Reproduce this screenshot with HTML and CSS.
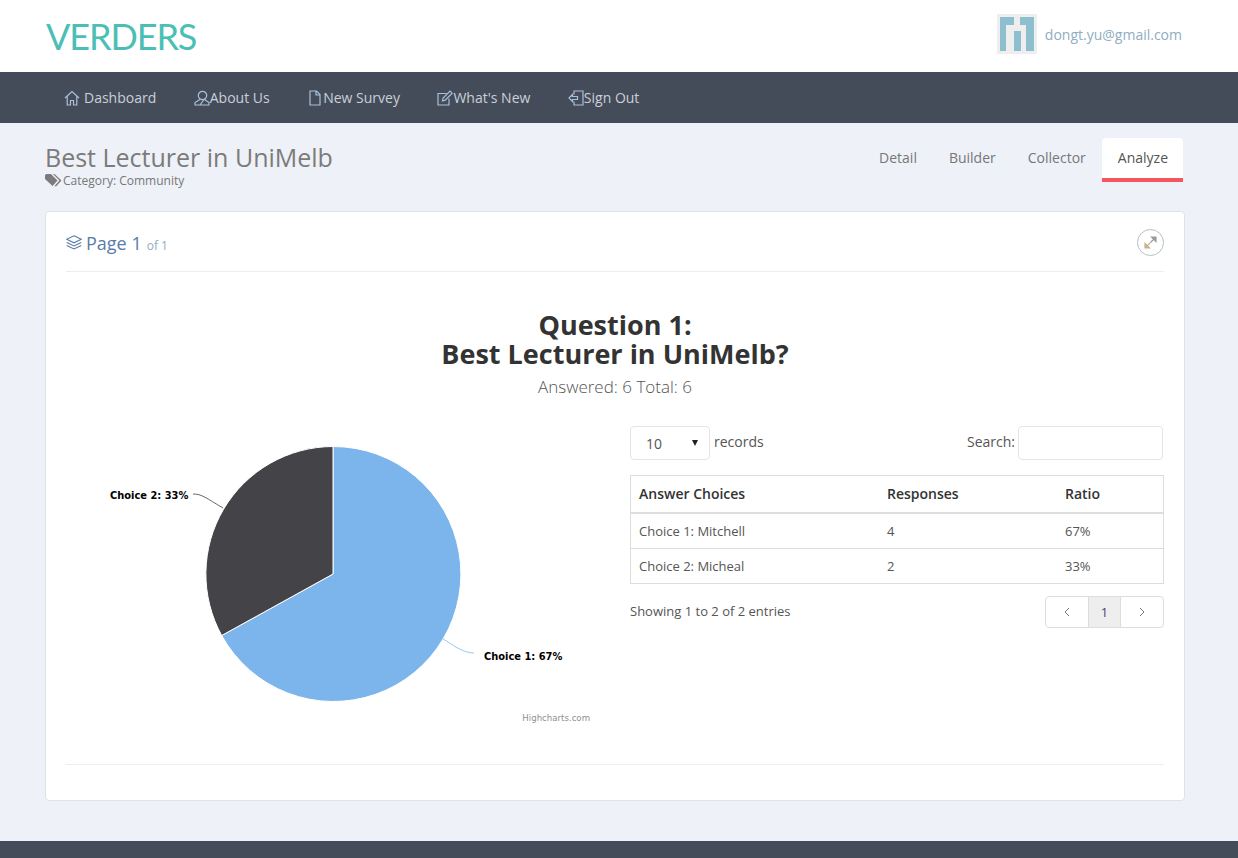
FILE: index.html
```html
<!DOCTYPE html>
<html lang="en">
<head>
    <meta charset="UTF-8">
    <title>Verders - Analyze</title>
    <link rel="stylesheet" href="styles.css">
</head>
<body>

    <header class="top-bar">
        <a class="logo">VERDERS</a>
        <div class="user-box">
            <svg class="avatar" viewBox="0 0 40 40">
                <rect width="40" height="40" fill="#eeeeee"/>
                <path d="M3 3h14v8H9v26H3z M23 3h14v34h-8V11h-6z M17 17h7v20h-7z" fill="#8ebfce"/>
            </svg>
            <span class="user-mail">dongt.yu@gmail.com</span>
        </div>
    </header>

    <nav class="main-nav">
        <a class="nav-item nav-first">
            <svg class="nav-icon" viewBox="0 0 16 16"><path d="M1 8l7-6.500L15 8M3.200 6.500V15h3.300v-4.500h3V15h3.300V6.500"/></svg>
            <span class="nav-gap">Dashboard</span>
        </a>
        <a class="nav-item">
            <svg class="nav-icon" viewBox="0 0 16 16"><circle cx="8.500" cy="5.500" r="4.200"/><path d="M6 9.500L1 12.500V15h14v-2.500l-4.500-3M6 15l4-5.500"/></svg>
            <span>About Us</span>
        </a>
        <a class="nav-item">
            <svg class="nav-icon" viewBox="0 0 16 16"><path d="M3 1h6.500L13 4.500V15H3zM9 1v4h4"/></svg>
            <span>New Survey</span>
        </a>
        <a class="nav-item">
            <svg class="nav-icon" viewBox="0 0 16 16"><path d="M12 8.500V15H1V3.500h8.500M5.500 11l.6-3L13 1l2.200 2.200-7 7z"/></svg>
            <span>What's New</span>
        </a>
        <a class="nav-item">
            <svg class="nav-icon" viewBox="0 0 16 16"><path d="M6 4.500V1h9v14H6v-3.500M1 8l3.500-3.500V6.500h5v3h-5v2z"/></svg>
            <span>Sign Out</span>
        </a>
    </nav>

    <main class="content">
        <div class="page-head">
            <div>
                <h1 class="survey-title">Best Lecturer in UniMelb</h1>
                <div class="survey-cat">
                    <svg class="tag-icon" viewBox="0 0 17 13"><path d="M0 1.500Q0 0 1.500 0H6l6.500 6.500-5 5.500L0 5zM8 0h1.500L16.500 6.500 11 12.500l-1.500-.5 5-5.500z"/></svg>
                    <span>Category: Community</span>
                </div>
            </div>
            <ul class="tabs">
                <li class="tab">Detail</li>
                <li class="tab">Builder</li>
                <li class="tab">Collector</li>
                <li class="tab tab-active">Analyze</li>
            </ul>
        </div>

        <section class="card">
            <div class="card-head">
                <div class="page-label">
                    <svg class="layers-icon" viewBox="0 0 16 15"><path d="M8 .8l7.300 3.500L8 7.800.7 4.300zM.7 7.500L8 11l7.300-3.500M.7 10.500L8 14l7.300-3.500"/></svg>
                    <span class="page-num">Page 1</span>
                    <small class="page-of">of 1</small>
                </div>
                <button class="expand-btn">
                    <svg viewBox="0 0 13 13">
                        <path d="M6.500 6.500L9.500 3.500M7.500 1h4.500v4.500z" class="arrow-dark"/>
                        <path d="M6.500 6.500L3.500 9.500M5.500 12H1V7.500z" class="arrow-tan"/>
                    </svg>
                </button>
            </div>

            <div class="question">
                <h2 class="question-title">Question 1:<br>Best Lecturer in UniMelb?</h2>
                <p class="question-sub">Answered: 6 Total: 6</p>
            </div>

            <div class="result-row">
                <svg class="chart" viewBox="0 0 534 320">
                    <!-- center 267,147 in this box -->
                    <path d="M267 147 L267 19.500 A127.500 127.500 0 1 1 155.700 208.500 Z" fill="#7cb5ec" stroke="#fff"/>
                    <path d="M267 147 L155.700 208.500 A127.500 127.500 0 0 1 267 19.500 Z" fill="#434348" stroke="#fff"/>
                    <path d="M127 67 C136 67 140 71 157 81" fill="none" stroke="#434348" stroke-width=".8"/>
                    <path d="M377 212 C386 217 396 226 408 226" fill="none" stroke="#7cb5ec" stroke-width=".8"/>
                    <text x="44" y="72" class="chart-label">Choice 2: 33%</text>
                    <text x="418" y="233" class="chart-label">Choice 1: 67%</text>
                    <text x="524" y="294" text-anchor="end" class="chart-credit">Highcharts.com</text>
                </svg>

                <div class="table-side">
                    <div class="table-tools">
                        <label class="len-box">
                            <span class="select-wrap">
                                <select class="len-select"><option>10</option><option>25</option></select>
                            </span>
                            <span class="tool-text">records</span>
                        </label>
                        <label class="search-box">
                            <span class="tool-text">Search:</span>
                            <input class="search-input" type="text">
                        </label>
                    </div>

                    <table class="answers">
                        <thead>
                            <tr><th class="col-a">Answer Choices</th><th class="col-b">Responses</th><th>Ratio</th></tr>
                        </thead>
                        <tbody>
                            <tr><td>Choice 1: Mitchell</td><td>4</td><td>67%</td></tr>
                            <tr><td>Choice 2: Micheal</td><td>2</td><td>33%</td></tr>
                        </tbody>
                    </table>

                    <div class="table-foot">
                        <span class="entries">Showing 1 to 2 of 2 entries</span>
                        <div class="pager">
                            <a class="pager-btn pager-side"><svg class="chev" viewBox="0 0 6 10"><path d="M5 1L1 5l4 4"/></svg></a>
                            <a class="pager-btn pager-cur">1</a>
                            <a class="pager-btn pager-side"><svg class="chev" viewBox="0 0 6 10"><path d="M1 1l4 4-4 4"/></svg></a>
                        </div>
                    </div>
                </div>
            </div>

            <div class="card-foot"></div>
        </section>
    </main>

    <footer class="page-foot"></footer>

</body>
</html>
```

FILE: styles.css
```css
/* base */
body {
    margin: 0;
    height: 858px;
    overflow: hidden;
    background-color: #eef1f8;
    font-family: "Open Sans", sans-serif;
    font-size: 13px;
    color: #555;
}

/* header */
.top-bar {
    height: 72px;
    background-color: #fff;
    display: flex;
    justify-content: space-between;
    align-items: center;
    padding: 0 56px 0 46px;
}

.logo {
    font-family: "Lato", sans-serif;
    font-size: 36px;
    letter-spacing: -1.100px;
    color: #4bbfb5;
}

.user-box {
    display: flex;
    align-items: center;
    gap: 8px;
    margin-top: -4px;
}

.avatar {
    width: 40px;
    height: 40px;
}

.user-mail {
    font-size: 14px;
    color: #8fadc4;
}

/* nav */
.main-nav {
    height: 51px;
    background-color: #454c59;
    display: flex;
    align-items: center;
    padding-left: 64px;
    gap: 37.500px;
}

.nav-item {
    display: flex;
    align-items: center;
    font-size: 14px;
    color: #c9d0da;
}

.nav-icon {
    width: 16px;
    height: 16px;
    fill: none;
    stroke: #a9c0d8;
    stroke-width: 1.200;
}

.nav-gap {
    margin-left: 4px;
}

/* title + tabs */
.content {
    padding: 15px 55px 0 45px;
}

.page-head {
    height: 73px;
    display: flex;
    justify-content: space-between;
    align-items: flex-start;
}

.survey-title {
    margin: 2px 0 0;
    font-size: 25px;
    line-height: 34px;
    font-weight: 400;
    color: #7b7b7b;
}

.survey-cat {
    display: flex;
    align-items: center;
    gap: 1px;
    font-size: 12px;
    line-height: 13px;
    color: #777;
}

.tag-icon {
    width: 17px;
    height: 13px;
    fill: #7b7b7b;
}

.tabs {
    list-style: none;
    margin: 0;
    padding: 0;
    display: flex;
}

.tab {
    height: 40px;
    padding: 0 16px;
    line-height: 40px;
    font-size: 14px;
    color: #777;
}

.tab-active {
    padding-right: 15px;
    background-color: #fff;
    color: #555;
    border-radius: 4px 4px 0 0;
    border-bottom: 4px solid #f3565d;
}

/* card */
.card {
    width: 1098px;
    height: 588px;
    padding: 0 20px;
    background-color: #fff;
    border: 1px solid #dfe2e6;
    border-radius: 4px;
}

.card-head {
    box-sizing: border-box;
    height: 60px;
    padding-top: 2px;
    display: flex;
    justify-content: space-between;
    align-items: center;
    border-bottom: 1px solid #eee;
}

.page-label {
    display: flex;
    align-items: baseline;
    color: #5b7ba8;
}

.layers-icon {
    width: 16px;
    height: 15px;
    margin-right: 4px;
    fill: none;
    stroke: #5b7ba8;
    stroke-width: 1.100;
    align-self: center;
}

.page-num {
    font-size: 18px;
}

.page-of {
    margin-left: 5px;
    font-size: 12px;
    color: #8fadc4;
}

.expand-btn {
    width: 27px;
    height: 27px;
    padding: 6px;
    background: #fff;
    border: 1px solid #b4c0c6;
    border-radius: 50%;
}

.expand-btn svg {
    display: block;
}

.arrow-dark {
    fill: #9a9a9a;
    stroke: #9a9a9a;
    stroke-width: 1.200;
}

.arrow-tan {
    fill: #c8b090;
    stroke: #c8b090;
    stroke-width: 1.200;
}

/* question */
.question {
    text-align: center;
    padding-top: 38px;
}

.question-title {
    margin: 0;
    font-size: 27px;
    line-height: 29px;
    font-weight: 700;
    color: #333;
}

.question-sub {
    margin: 8px 0 0;
    font-size: 17px;
    line-height: 22px;
    font-weight: 300;
    color: #555;
}

/* chart + table */
.result-row {
    display: flex;
    gap: 30px;
    margin-top: 28px;
}

.chart {
    width: 534px;
    height: 320px;
    margin-top: 1px;
    flex-shrink: 0;
}

.chart-label {
    font-family: "DejaVu Sans", sans-serif;
    font-size: 9.900px;
    font-weight: 700;
    fill: #000;
}

.chart-credit {
    font-family: "DejaVu Sans", sans-serif;
    font-size: 8.600px;
    fill: #909090;
}

.table-side {
    flex: 1;
    min-width: 0;
}

.table-tools {
    display: flex;
    justify-content: space-between;
    align-items: flex-start;
    height: 49px;
    font-size: 14px;
}

.len-box {
    display: flex;
    align-items: flex-start;
    gap: 4px;
}

.tool-text {
    line-height: 32px;
}

.search-box {
    display: flex;
    gap: 3px;
    margin-right: 1px;
}

.select-wrap {
    position: relative;
    display: block;
    height: 34px;
}

/* solid arrow instead of the default chevron */
.select-wrap::after {
    content: "";
    position: absolute;
    right: 12px;
    top: 14px;
    border-left: 3px solid transparent;
    border-right: 3px solid transparent;
    border-top: 6px solid #222;
    pointer-events: none;
}

.len-select {
    display: block;
    box-sizing: border-box;
    width: 80px;
    height: 34px;
    padding: 0 15px;
    appearance: none;
    background-color: #fff;
    font-family: "Open Sans", sans-serif;
    font-size: 14px;
    color: #555;
    border: 1px solid #e5e5e5;
    border-radius: 4px;
}

.search-input {
    box-sizing: border-box;
    width: 145px;
    height: 34px;
    border: 1px solid #e5e5e5;
    border-radius: 4px;
}

.answers {
    width: 534px;
    border-collapse: collapse;
    table-layout: fixed;
    border: 1px solid #ddd;
}

.answers th,
.answers td {
    padding: 0 8px;
    text-align: left;
}

.answers th {
    height: 34px;
    padding-bottom: 2px;
    font-size: 14px;
    font-weight: 600;
    color: #333;
    border-bottom: 2px solid #ddd;
}

.answers td {
    height: 34px;
    font-size: 13px;
    border-top: 1px solid #ddd;
}

.col-a {
    width: 232px;
}

.col-b {
    width: 162px;
}

.table-foot {
    display: flex;
    justify-content: space-between;
    align-items: center;
    margin-top: 12px;
}

.entries {
    margin-top: -2px;
}

.pager {
    display: flex;
    height: 32px;
    box-sizing: border-box;
    border: 1px solid #ddd;
    border-radius: 4px;
}

.pager-btn {
    text-align: center;
    line-height: 30px;
    color: #555;
}

.pager-side {
    width: 42px;
}

.chev {
    width: 6px;
    height: 10px;
    fill: none;
    stroke: #777;
    stroke-width: 1;
}

.pager-cur {
    width: 31px;
    background-color: #eee;
    color: #5a3a70;
    border-left: 1px solid #ddd;
    border-right: 1px solid #ddd;
}

.card-foot {
    margin-top: 17px;
    border-top: 1px solid #eee;
}

/* footer */
.page-foot {
    margin-top: 40px;
    height: 17px;
    background-color: #454c59;
}
```
